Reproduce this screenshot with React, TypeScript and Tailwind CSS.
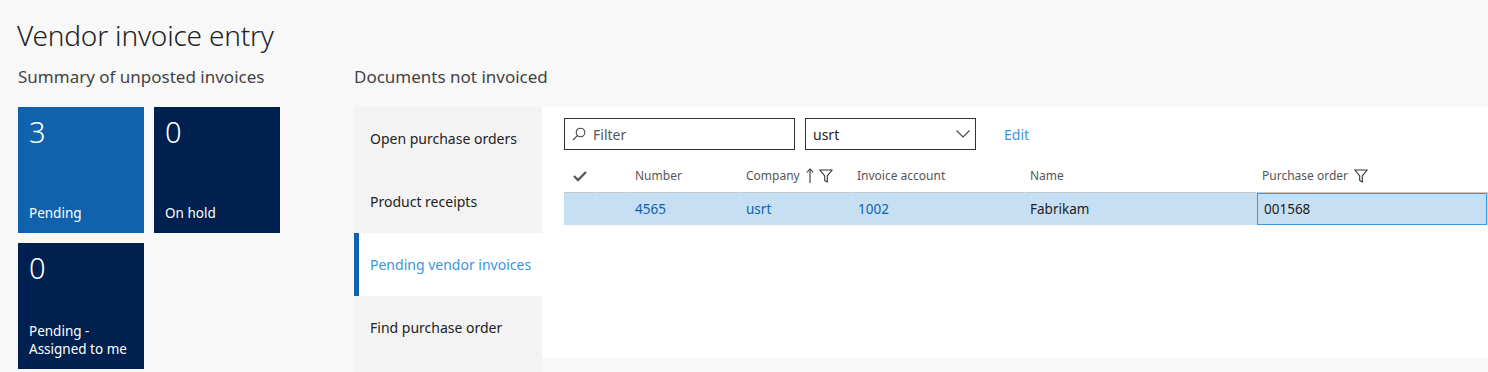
import React from "react";

const font = { fontFamily: '"Noto Sans", "Open Sans", Arial, sans-serif' };

function SearchIcon() {
  return (
    <svg width="14" height="14" viewBox="0 0 14 14" fill="none" stroke="#444" strokeWidth="1.1">
      <circle cx="8.5" cy="5.5" r="4.3" />
      <line x1="5.4" y1="8.6" x2="1" y2="13" />
    </svg>
  );
}

function Chevron() {
  return (
    <svg width="14" height="8" viewBox="0 0 14 8" fill="none" stroke="#444" strokeWidth="1.1">
      <polyline points="0.5,0.5 7,7 13.5,0.5" />
    </svg>
  );
}

function Check() {
  return (
    <svg width="14" height="11" viewBox="0 0 14 11" fill="none" stroke="#5a5a5a" strokeWidth="2.4">
      <polyline points="1,5 5,9 13,1" />
    </svg>
  );
}

function Funnel() {
  return (
    <svg width="14" height="14" viewBox="0 0 14 14" fill="none" stroke="#333" strokeWidth="1.1">
      <path d="M0.8 1 H13.2 L8.3 6.8 V13 L5.7 11.6 V6.8 Z" strokeLinejoin="round" />
    </svg>
  );
}

function UpArrow() {
  return (
    <svg width="8" height="15" viewBox="0 0 8 15" fill="none" stroke="#333" strokeWidth="1.1">
      <line x1="4" y1="1" x2="4" y2="15" />
      <polyline points="0.8,4.5 4,1 7.2,4.5" />
    </svg>
  );
}

function Tile({ n, label, dark }: { n: string; label: React.ReactNode; dark?: boolean }) {
  return (
    <div
      className={`w-[126px] h-[126px] flex flex-col justify-between px-[11px] pt-[7px] pb-[11px] text-white ${
        dark ? "bg-[#002050]" : "bg-[#1062ad]"
      }`}
    >
      <div className="text-[29px] leading-[36px] font-light">{n}</div>
      <div className="text-[13.5px] leading-[18px]">{label}</div>
    </div>
  );
}

const cols = [
  { w: 32, label: <Check />, center: true },
  { w: 33, label: null },
  { w: 111, label: "Number" },
  {
    w: 111,
    label: (
      <span className="flex items-center">
        Company
        <span className="ml-[6px] mt-[-2px]"><UpArrow /></span>
        <span className="ml-[5px]"><Funnel /></span>
      </span>
    ),
  },
  { w: 173, label: "Invoice account" },
  { w: 232, label: "Name" },
  {
    w: 232,
    label: (
      <span className="flex items-center">
        Purchase order
        <span className="ml-[6px]"><Funnel /></span>
      </span>
    ),
  },
];

export default function App() {
  return (
    <div className="w-[1488px] h-[372px] bg-[#f8f8f8] overflow-hidden text-[#222]" style={font}>
      <div className="pl-[17px] pt-[15px] text-[28px] leading-[40px] font-light text-[#1f1f1f] tracking-[-0.2px]">
        Vendor invoice entry
      </div>
      <div className="flex mt-[10px]">
        <div className="w-[354px] pl-[18px]">
          <div className="text-[17px] leading-[24px] text-[#444] h-[26px]">Summary of unposted invoices</div>
          <div className="mt-[16px] grid grid-cols-[126px_126px] gap-[10px]">
            <Tile n="3" label="Pending" />
            <Tile n="0" label="On hold" dark />
            <Tile
              n="0"
              dark
              label={
                <>
                  Pending -<br />
                  Assigned to me
                </>
              }
            />
          </div>
        </div>
        <div className="flex-1">
          <div className="text-[17px] leading-[24px] text-[#444] h-[26px]">Documents not invoiced</div>
          <div className="mt-[16px] flex h-[265px]">
            <div className="w-[188px] bg-[#f3f3f3] flex flex-col text-[14px]">
              <div className="h-[63px] flex items-center pl-[16px] text-[#222]">Open purchase orders</div>
              <div className="h-[63px] flex items-center pl-[16px] text-[#222]">Product receipts</div>
              <div className="h-[63px] flex items-center pl-[11px] border-l-[5px] border-[#1062ad] bg-white text-[#3a96dd] whitespace-nowrap">
                Pending vendor invoices
              </div>
              <div className="h-[63px] flex items-center pl-[16px] text-[#222]">Find purchase order</div>
            </div>
            <div className="flex-1 flex flex-col">
              <div className="bg-white h-[251px] pl-[22px] pt-[11px]">
                <div className="flex items-center">
                  <div className="w-[231px] h-[32px] border border-[#333] flex items-center pl-[7px] bg-white">
                    <SearchIcon />
                    <span className="ml-[7px] text-[14px] text-[#555]">Filter</span>
                  </div>
                  <div className="ml-[10px] w-[171px] h-[32px] border border-[#333] flex items-center justify-between pl-[7px] pr-[5px]">
                    <span className="text-[14px] text-[#222]">usrt</span>
                    <Chevron />
                  </div>
                  <span className="ml-[28px] text-[14px] text-[#3a96dd]">Edit</span>
                </div>
                <div className="mt-[10px] flex text-[12px] text-[#555]">
                  {cols.map((c, i) => (
                    <div
                      key={i}
                      style={{ width: c.w }}
                      className={`h-[33px] border-b border-[#c8c8c8] flex items-center ${
                        i > 0 ? "border-l border-l-white" : ""
                      } ${c.center ? "justify-center" : "pl-[5px]"}`}
                    >
                      {c.label}
                    </div>
                  ))}
                </div>
                <div className="flex h-[32px] bg-[#c7dff2] text-[13.5px]">
                  <div className="w-[65px]" />
                  <div className="w-[111px] pl-[6px] flex items-center text-[#1062ad]">4565</div>
                  <div className="w-[111px] pl-[6px] flex items-center text-[#1062ad]">usrt</div>
                  <div className="w-[173px] pl-[7px] flex items-center text-[#1062ad]">1002</div>
                  <div className="w-[232px] pl-[6px] flex items-center text-[#222]">Fabrikam</div>
                  <div className="w-[230px] ml-[1px] border border-[#3a96dd] pl-[6px] flex items-center text-[#222]">
                    001568
                  </div>
                </div>
              </div>
            </div>
          </div>
        </div>
      </div>
    </div>
  );
}
